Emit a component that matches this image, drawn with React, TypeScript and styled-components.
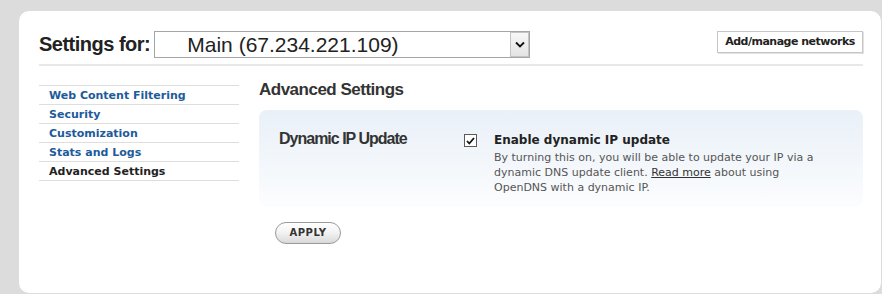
import React from 'react';
import styled, { createGlobalStyle } from 'styled-components';

const GlobalStyle = createGlobalStyle`
  html, body {
    margin: 0;
    padding: 0;
    background: #dcdcdc;
  }
  body {
    font-family: "DejaVu Sans", Verdana, sans-serif;
  }
`;

const Page = styled.div`
  padding: 11px 1px 0 19px;
  height: 294px;
  box-sizing: border-box;
  overflow: hidden;
`;

const Card = styled.div`
  background: #fff;
  border-radius: 10px;
  height: 282px;
  box-sizing: border-box;
  padding: 20px 18px 0 20px;
`;

const Header = styled.div`
  display: flex;
  align-items: flex-start;
  height: 27px;
  padding-bottom: 6px;
  border-bottom: 2px solid #e8e8e8;
`;

const Title = styled.h1`
  margin: 0 4px 0 0;
  font: bold 20px/27px "Liberation Sans", Arial, sans-serif;
  letter-spacing: -0.5px;
  color: #222;
`;

const Select = styled.div`
  display: flex;
  width: 376px;
  height: 27px;
  box-sizing: border-box;
  border: 1px solid #a5a5a5;
  background: #fff;
`;

const SelectValue = styled.div`
  flex: 1;
  padding-left: 32px;
  font: 21px/25px "Liberation Sans", Arial, sans-serif;
  color: #222;
  white-space: pre;
`;

const SelectArrow = styled.div`
  width: 17px;
  border: 1px solid #c4c4c4;
  background: linear-gradient(#f7f7f7, #e4e4e4);
  display: flex;
  align-items: center;
  justify-content: center;
`;

const ManageButton = styled.button`
  margin-left: auto;
  height: 22px;
  width: 146px;
  padding: 0;
  border: 1px solid #c6c6c6;
  box-shadow: 1px 1px 0 #e2e2e2;
  background: #fff;
  font: bold 11px/20px "DejaVu Sans", Verdana, sans-serif;
  letter-spacing: -0.5px;
  color: #222;
  cursor: pointer;
`;

const Body = styled.div`
  display: flex;
  gap: 20px;
  margin-top: 14px;
`;

const Nav = styled.ul`
  list-style: none;
  margin: 5px 0 0;
  padding: 0;
  width: 200px;
  border-top: 1px solid #dedede;
`;

const NavItem = styled.li<{ $active?: boolean }>`
  height: 18px;
  border-bottom: 1px solid #dedede;
  padding-left: 10px;
  font: bold 11px/19px "DejaVu Sans", Verdana, sans-serif;
  color: ${(p) => (p.$active ? '#222' : '#1d5b9b')};
`;

const Main = styled.div`
  flex: 1;
`;

const Heading = styled.h2`
  margin: 0 0 10px;
  font: bold 17px/20px "Liberation Sans", Arial, sans-serif;
  letter-spacing: -0.5px;
  color: #333;
`;

const Panel = styled.div`
  display: flex;
  height: 97px;
  box-sizing: border-box;
  padding: 20px 20px 0 20px;
  border-radius: 8px;
  background: linear-gradient(#e9f0f8, #f3f7fb 55%, #fcfdfe);
`;

const Label = styled.div`
  width: 185px;
  font: bold 16px/18px "Liberation Sans", Arial, sans-serif;
  letter-spacing: -1px;
  color: #333;
`;

const CheckBox = styled.div`
  width: 13px;
  height: 13px;
  box-sizing: border-box;
  margin: 4px 17px 0 0;
  border: 1px solid #5a5a5a;
  background: #fff;
  display: flex;
  align-items: center;
  justify-content: center;
`;

const Option = styled.div`
  padding-top: 2px;
`;

const OptionTitle = styled.div`
  font: bold 12px/16px "DejaVu Sans", Verdana, sans-serif;
  color: #222;
`;

const OptionText = styled.p`
  margin: 2px 0 0;
  font: 11px/15px "DejaVu Sans", Verdana, sans-serif;
  color: #555;
  white-space: nowrap;

  a {
    color: #333;
    text-decoration: underline;
  }
`;

const ApplyButton = styled.button`
  margin: 15px 0 0 16px;
  width: 66px;
  height: 22px;
  border: 1px solid #9a9a9a;
  border-radius: 11px;
  background: linear-gradient(#ffffff, #f4f4f4 45%, #d9d9d9);
  font: bold 10px/20px "DejaVu Sans", Verdana, sans-serif;
  letter-spacing: 0.5px;
  color: #333;
  padding: 0;
  cursor: pointer;
`;

const navItems = [
  'Web Content Filtering',
  'Security',
  'Customization',
  'Stats and Logs',
  'Advanced Settings',
];

export default function App() {
  return (
    <>
      <GlobalStyle />
      <Page>
        <Card>
          <Header>
            <Title>Settings for:</Title>
            <Select>
              <SelectValue>Main (67.234.221.109)</SelectValue>
              <SelectArrow>
                <svg width="10" height="7" viewBox="0 0 10 7">
                  <path d="M1 1.5 L5 5.5 L9 1.5" fill="none" stroke="#111" strokeWidth="1.8" />
                </svg>
              </SelectArrow>
            </Select>
            <ManageButton>Add/manage networks</ManageButton>
          </Header>
          <Body>
            <Nav>
              {navItems.map((item) => (
                <NavItem key={item} $active={item === 'Advanced Settings'}>
                  {item}
                </NavItem>
              ))}
            </Nav>
            <Main>
              <Heading>Advanced Settings</Heading>
              <Panel>
                <Label>Dynamic IP Update</Label>
                <CheckBox>
                  <svg width="9" height="8" viewBox="0 0 9 8">
                    <path d="M1 4 L3.3 6.5 L8 1" fill="none" stroke="#111" strokeWidth="1.8" />
                  </svg>
                </CheckBox>
                <Option>
                  <OptionTitle>Enable dynamic IP update</OptionTitle>
                  <OptionText>
                    By turning this on, you will be able to update your IP via a
                    <br />
                    dynamic DNS update client. <a href="#">Read more</a> about using
                    <br />
                    OpenDNS with a dynamic IP.
                  </OptionText>
                </Option>
              </Panel>
              <ApplyButton>APPLY</ApplyButton>
            </Main>
          </Body>
        </Card>
      </Page>
    </>
  );
}
